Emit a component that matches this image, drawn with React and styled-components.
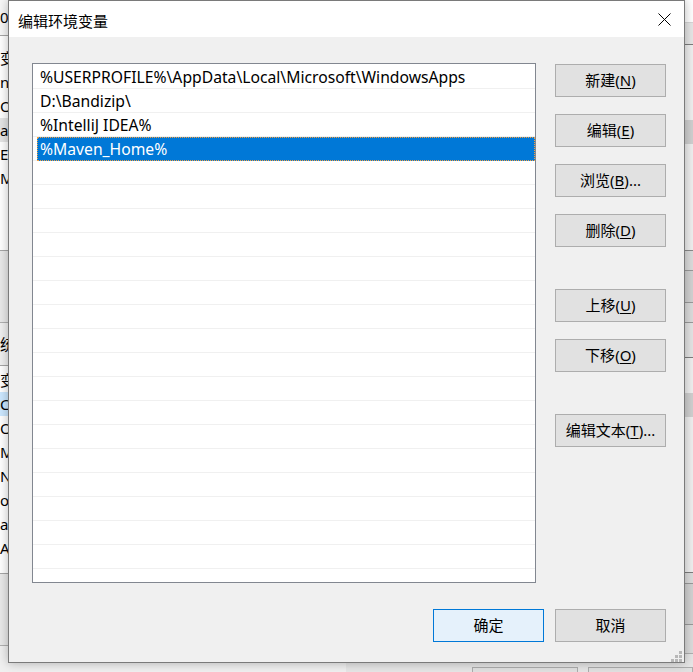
import React from 'react';
import styled, { createGlobalStyle } from 'styled-components';

const GlobalStyle = createGlobalStyle`
  html, body {
    margin: 0;
    padding: 0;
  }
  body {
    width: 693px;
    height: 672px;
    overflow: hidden;
    background: #f0f0f0;
    font-family: "Noto Sans", "Noto Sans CJK SC", sans-serif;
  }
`;

const Desktop = styled.div`
  position: relative;
  width: 693px;
  height: 672px;
  overflow: hidden;
`;

/* ---- parent window behind the dialog ---- */

const Parent = styled.div`
  display: flex;
  width: 693px;
  height: 672px;
`;

const ParentColumn = styled.div`
  width: ${props => props.w}px;
  display: flex;
  flex-direction: column;
`;

const Band = styled.div`
  height: ${props => props.h}px;
  flex: ${props => props.grow ? 1 : 'none'};
  background: ${props => props.bg};
  border-bottom: ${props => props.line ? `1px solid ${props.line}` : 'none'};
  box-sizing: border-box;
  overflow: hidden;
  padding-top: ${props => props.pt || 0}px;
  font-size: 15px;
  color: #000;
  white-space: nowrap;
`;

const BackRow = styled.div`
  height: 24px;
  line-height: 24px;
  background: ${props => props.hl || 'transparent'};
`;

const BackButtons = styled.div`
  display: flex;
  gap: 10px;
  padding-left: 126px;
`;

const BackButton = styled.div`
  width: 111px;
  height: 33px;
  box-sizing: border-box;
  background: #e1e1e1;
  border: 1px solid #adadad;
`;

/* ---- dialog ---- */

const Dialog = styled.div`
  position: absolute;
  left: 8px;
  top: 0;
  width: 677px;
  height: 663px;
  box-sizing: border-box;
  border: 1px solid #7a7a7a;
  background: #f0f0f0;
  box-shadow: 0 0 10px rgba(0, 0, 0, 0.28);
  display: flex;
  flex-direction: column;
`;

const TitleBar = styled.div`
  height: 36px;
  flex: none;
  background: #fff;
  display: flex;
  align-items: center;
  justify-content: space-between;
  padding: 3px 13px 0 9px;
  box-sizing: border-box;
`;

const Title = styled.span`
  font-family: "Noto Sans CJK SC", sans-serif;
  font-size: 15px;
  color: #000;
`;

const CloseIcon = styled.svg`
  width: 13px;
  height: 13px;
  margin-top: -3px;
  display: block;
`;

const Body = styled.div`
  flex: 1;
  display: flex;
  flex-direction: column;
  padding: 26px 0 20px 23px;
`;

const Main = styled.div`
  display: flex;
  gap: 19px;
`;

const ListBox = styled.div`
  width: 504px;
  height: 520px;
  box-sizing: border-box;
  border: 1px solid #828790;
  background: #fff;
  padding-top: 1px;
  overflow: hidden;
`;

const Row = styled.div`
  height: 24px;
  display: flex;
  padding-left: 4px;
  box-shadow: inset 0 -1px 0 #f0f0f0;
`;

const RowInner = styled.div`
  flex: 1;
  display: flex;
  align-items: center;
  padding-left: 3px;
  font-family: "Noto Sans", sans-serif;
  font-size: 15.7px;
  white-space: nowrap;
  color: ${props => props.selected ? '#fff' : '#000'};
  background: ${props => props.selected ? '#0078d7' : 'transparent'};
  outline: ${props => props.selected ? '1px dotted #f5a040' : 'none'};
  outline-offset: -1px;
`;

const SideColumn = styled.div`
  display: flex;
  flex-direction: column;
  gap: 42px;
  padding-top: 1px;
`;

const ButtonGroup = styled.div`
  display: flex;
  flex-direction: column;
  gap: 17px;
`;

const Button = styled.button`
  width: 111px;
  height: 33px;
  box-sizing: border-box;
  padding: 0 0 2px;
  margin: 0;
  background: ${props => props.primary ? '#e5f1fb' : '#e1e1e1'};
  border: 1px solid ${props => props.primary ? '#0078d7' : '#adadad'};
  border-radius: 0;
  font-family: "Noto Sans", "Noto Sans CJK SC", sans-serif;
  font-size: 15px;
  color: #000;
  display: flex;
  align-items: center;
  justify-content: center;
`;

const Key = styled.span`
  text-decoration: underline;
  text-underline-offset: 2px;
`;

const Footer = styled.div`
  display: flex;
  justify-content: flex-end;
  gap: 11px;
  margin-top: 26px;
  padding-right: 18px;
`;

const Grip = styled.svg`
  position: absolute;
  right: 2px;
  bottom: 0;
  width: 11px;
  height: 11px;
`;

const entries = [
  '%USERPROFILE%\\AppData\\Local\\Microsoft\\WindowsApps',
  'D:\\Bandizip\\',
  '%IntelliJ IDEA%',
  '%Maven_Home%',
];

const rows = Array.from({ length: 22 }, (_, i) => entries[i] || '');

const Label = ({ text, k, tail = '' }) => (
  <span>{text}(<Key>{k}</Key>){tail}</span>
);

export default function App() {
  return (
    <Desktop>
      <GlobalStyle />
      <Parent>
        <ParentColumn w={346}>
          <Band h={36} bg="#f7f7f7" line="#a6a6a6" pt={5}>
            <BackRow>0</BackRow>
          </Band>
          <Band h={215} bg="#ffffff" line="#a6a6a6" pt={10}>
            <BackRow>变量</BackRow>
            <BackRow>nt</BackRow>
            <BackRow>Or</BackRow>
            <BackRow hl="#e5e5e5">a</BackRow>
            <BackRow>E</BackRow>
            <BackRow>M</BackRow>
          </Band>
          <Band h={72} bg="#e9e9e9" line="#b0b0b0" />
          <Band h={43} bg="#f0f0f0" line="#a6a6a6" pt={9}>
            <BackRow>统</BackRow>
          </Band>
          <Band h={208} bg="#ffffff" line="#a6a6a6" pt={2}>
            <BackRow>变量</BackRow>
            <BackRow hl="#cce8ff">Co</BackRow>
            <BackRow>Or</BackRow>
            <BackRow>Ma</BackRow>
            <BackRow>NU</BackRow>
            <BackRow>oS</BackRow>
            <BackRow>a</BackRow>
            <BackRow>A</BackRow>
          </Band>
          <Band h={72} bg="#e9e9e9" line="#b0b0b0" />
          <Band grow bg="#f0f0f0" />
        </ParentColumn>
        <ParentColumn w={347}>
          <Band h={23} bg="#ffffff" line="#d6d6d6" />
          <Band h={22} bg="#e6e6e6" line="#7d7d7d" />
          <Band h={206} bg="#efefef" line="#8a8a8a" pt={75}>
            <BackRow hl="#d0d0d0" />
          </Band>
          <Band h={20} bg="#dcdcdc" line="#9a9a9a" />
          <Band h={32} bg="#d2d2d2" line="#9a9a9a" />
          <Band h={20} bg="#dcdcdc" line="#9a9a9a" />
          <Band h={35} bg="#e4e4e4" line="#7d7d7d" />
          <Band h={215} bg="#efefef" line="#7d7d7d" pt={35}>
            <BackRow hl="#d0d0d0" />
          </Band>
          <Band h={11} bg="#dcdcdc" line="#9a9a9a" />
          <Band h={41} bg="#d2d2d2" line="#9a9a9a" />
          <Band h={29} bg="#dcdcdc" line="#b0b0b0" />
          <Band grow bg="#e6e6e6" pt={13}>
            <BackButtons>
              <BackButton />
              <BackButton />
            </BackButtons>
          </Band>
        </ParentColumn>
      </Parent>

      <Dialog>
        <TitleBar>
          <Title>编辑环境变量</Title>
          <CloseIcon viewBox="0 0 13 13">
            <path d="M0.5 0.5 L12.5 12.5 M12.5 0.5 L0.5 12.5" stroke="#000" strokeWidth="1" fill="none" />
          </CloseIcon>
        </TitleBar>
        <Body>
          <Main>
            <ListBox>
              {rows.map((text, i) => (
                <Row key={i}>
                  <RowInner selected={i === 3}>{text}</RowInner>
                </Row>
              ))}
            </ListBox>
            <SideColumn>
              <ButtonGroup>
                <Button><Label text="新建" k="N" /></Button>
                <Button><Label text="编辑" k="E" /></Button>
                <Button><Label text="浏览" k="B" tail="..." /></Button>
                <Button><Label text="删除" k="D" /></Button>
              </ButtonGroup>
              <ButtonGroup>
                <Button><Label text="上移" k="U" /></Button>
                <Button><Label text="下移" k="O" /></Button>
              </ButtonGroup>
              <ButtonGroup>
                <Button><Label text="编辑文本" k="T" tail="..." /></Button>
              </ButtonGroup>
            </SideColumn>
          </Main>
          <Footer>
            <Button primary>确定</Button>
            <Button>取消</Button>
          </Footer>
        </Body>
        <Grip viewBox="0 0 11 11">
          <g fill="#b8b8b8">
            <rect x="8" y="0" width="3" height="3" />
            <rect x="4" y="4" width="3" height="3" />
            <rect x="8" y="4" width="3" height="3" />
            <rect x="0" y="8" width="3" height="3" />
            <rect x="4" y="8" width="3" height="3" />
            <rect x="8" y="8" width="3" height="3" />
          </g>
        </Grip>
      </Dialog>
    </Desktop>
  );
}
